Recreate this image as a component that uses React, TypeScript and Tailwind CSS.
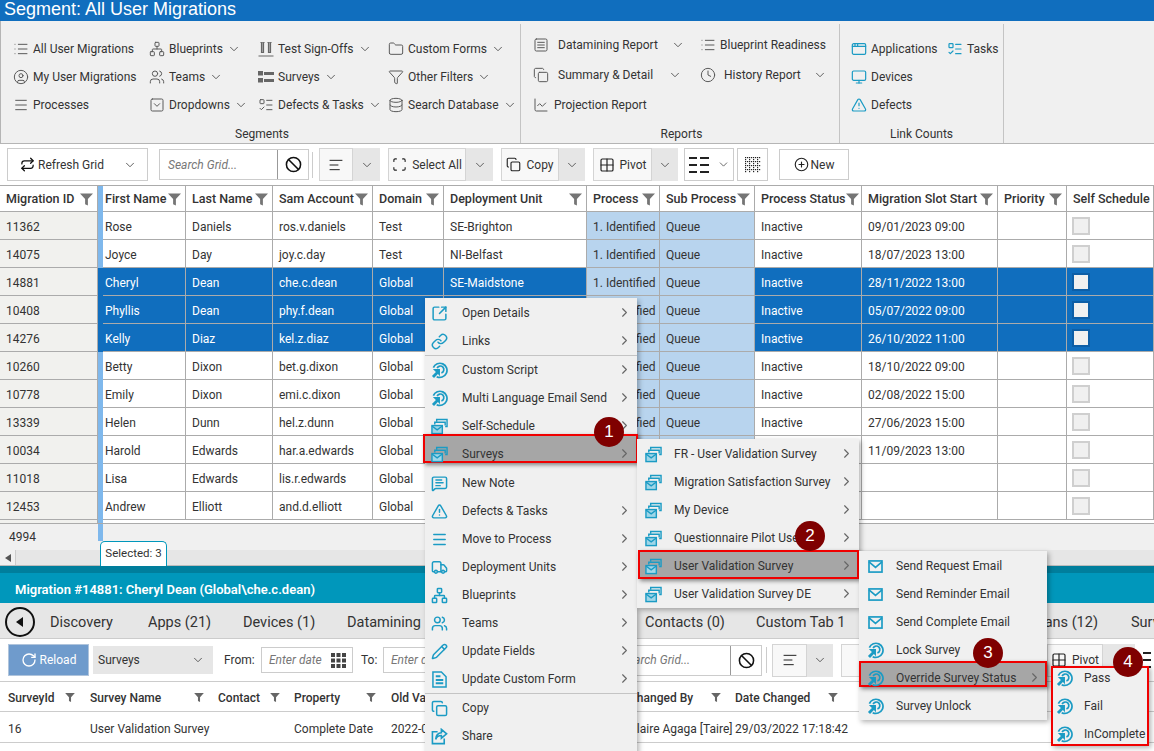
import type { ReactNode } from "react";
import {
  AlignLeft,
  AppWindow,
  Ban,
  ChartLine,
  ChevronDown,
  ChevronRight,
  CircleUser,
  CirclePlus,
  Clock,
  Copy,
  Database,
  Folder,
  Funnel,
  Grid2x2,
  Link,
  List,
  ListTodo,
  Menu,
  MessageSquareText,
  Monitor,
  Network,
  Pencil,
  Repeat,
  RotateCw,
  Scan,
  SquareArrowOutUpRight,
  SquareChevronDown,
  SquareMenu,
  TriangleAlert,
  Truck,
  Users,
} from "lucide-react";

const rowGrid =
  "grid grid-cols-[98px_5px_83px_87px_100px_71px_143px_73px_95px_107px_136px_69px_87px]";
const gridBorder = "border-r border-b border-[#ababab]";

const migrations = [
  ["11362", "Rose", "Daniels", "ros.v.daniels", "Test", "SE-Brighton", "1. Identified", "Queue", "Inactive", "09/01/2023 09:00"],
  ["14075", "Joyce", "Day", "joy.c.day", "Test", "NI-Belfast", "1. Identified", "Queue", "Inactive", "18/07/2023 13:00"],
  ["14881", "Cheryl", "Dean", "che.c.dean", "Global", "SE-Maidstone", "1. Identified", "Queue", "Inactive", "28/11/2022 13:00"],
  ["10408", "Phyllis", "Dean", "phy.f.dean", "Global", "", "1. Identified", "Queue", "Inactive", "05/07/2022 09:00"],
  ["14276", "Kelly", "Diaz", "kel.z.diaz", "Global", "", "1. Identified", "Queue", "Inactive", "26/10/2022 11:00"],
  ["10260", "Betty", "Dixon", "bet.g.dixon", "Global", "", "1. Identified", "Queue", "Inactive", "18/10/2022 09:00"],
  ["10778", "Emily", "Dixon", "emi.c.dixon", "Global", "", "1. Identified", "Queue", "Inactive", "02/08/2022 15:00"],
  ["13339", "Helen", "Dunn", "hel.z.dunn", "Global", "", "1. Identified", "Queue", "Inactive", "27/06/2023 15:00"],
  ["10034", "Harold", "Edwards", "har.a.edwards", "Global", "", "", "", "", "11/09/2023 13:00"],
  ["11018", "Lisa", "Edwards", "lis.r.edwards", "Global", "", "", "", "", ""],
  ["12453", "Andrew", "Elliott", "and.d.elliott", "Global", "", "", "", "", ""],
];

const headers = [
  "Migration ID",
  "",
  "First Name",
  "Last Name",
  "Sam Account",
  "Domain",
  "Deployment Unit",
  "Process",
  "Sub Process",
  "Process Status",
  "Migration Slot Start",
  "Priority",
  "Self Schedule L",
];

function HeadFunnel({ small }: { small?: boolean }) {
  return (
    <svg viewBox="0 0 14 13" className={small ? "w-[10px] h-[9px] shrink-0" : "w-[13px] h-[13px] shrink-0"}>
      <path d="M0 0h14L8.500 6v7l-3-1.500V6z" fill={small ? "#666" : "#757575"} />
    </svg>
  );
}

function TargetIcon() {
  return (
    <svg viewBox="0 0 18 18" className="w-[17px] h-[17px]" fill="none" stroke="#1b9bc4">
      <path d="M6 15.500A7.500 7.500 0 1 0 2.500 6" strokeWidth="1.800" />
      <path d="M6.500 6.500A3.700 3.700 0 1 1 11 11.500" strokeWidth="1.800" />
      <path d="M2 7.500h7.500V15L7.300 12.800 3.200 17 1 14.800l4.200-4.100z" fill="#1b9bc4" stroke="none" />
    </svg>
  );
}

function SurveyIcon() {
  return (
    <svg viewBox="0 0 18 18" className="w-[17px] h-[17px]" fill="none" stroke="#1b9bc4" strokeWidth="1.500">
      <path d="M6 4V1.500h11V9h-2" />
      <path d="M4 7V4.500h11V8" />
      <rect x="1" y="8" width="11" height="8.500" fill="#9fd6e8" />
      <path d="M1 8.500l5.500 4 5.500-4" />
    </svg>
  );
}

function FormIcon() {
  return (
    <svg viewBox="0 0 16 18" className="w-[15px] h-[17px]" fill="none" stroke="#1b9bc4" strokeWidth="1.600">
      <path d="M1 1h9l5 5v11H1z" />
      <path d="M4 5.500h5M4 9.500h8M4 13h8" strokeWidth="2" />
    </svg>
  );
}

function ShareIcon() {
  return (
    <svg viewBox="0 0 18 18" className="w-[17px] h-[17px]" fill="none" stroke="#1b9bc4" strokeWidth="1.700">
      <path d="M7 4H1.500v12.500H14V11" />
      <path d="M11 1.500l5.500 4.700-5.500 4.600V8C8 8 6 9.500 5 12c0-4 2.500-7 6-7z" />
    </svg>
  );
}

function BlueMail() {
  return (
    <svg viewBox="0 0 16 14" className="w-[15px] h-[13px]" fill="none" stroke="#1b9bc4" strokeWidth="1.800">
      <rect x="1" y="1" width="14" height="12" />
      <path d="M1 2l7 6 7-6" />
    </svg>
  );
}

function TubesIcon() {
  return (
    <svg viewBox="0 0 16 16" className="w-[16px] h-[16px]" fill="none" stroke="#666" strokeWidth="1.200">
      <path d="M2.500 1.500h4M9.500 1.500h4M0.500 15h15" />
      <path d="M3.500 1.500v10h2v-10M10.500 1.500v10h2v-10" fill="#aaa" />
    </svg>
  );
}

function SurveyBarsIcon() {
  return (
    <svg viewBox="0 0 16 16" className="w-[16px] h-[16px]" fill="#666">
      <path d="M0 2h5v4.500H0zM6 3h10v3H6zM0 9h5v4.500H0zM6 10h10v3H6z" />
    </svg>
  );
}

const blue = { size: 17, color: "#1b9bc4", strokeWidth: 2.1 };

type menuItem = {
  icon: ReactNode;
  label: string;
  more?: boolean;
  hot?: string;
  extra?: string;
};

function ContextMenu({
  items,
  className,
  iconBox,
  chevron,
}: {
  items: menuItem[];
  className: string;
  iconBox: string;
  chevron: string;
}) {
  return (
    <div className={"absolute bg-[#f0f0f0] shadow-[2px_2px_5px_rgba(0,0,0,0.3)] " + className}>
      {items.map((it) => (
        <div key={it.label} className={"relative h-[28px] flex items-center text-[#333] " + (it.extra ?? "")}>
          {it.hot && (
            <div
              className={
                "absolute bg-[#a6a6a6] border-2 border-[#f00000] shadow-[2px_2px_4px_rgba(0,0,0,0.45)] " + it.hot
              }
            />
          )}
          <div className={"relative flex justify-center items-center shrink-0 " + iconBox}>{it.icon}</div>
          <span className="relative whitespace-nowrap">{it.label}</span>
          {it.more && (
            <ChevronRight size={15} color="#666" strokeWidth={1.8} className={"absolute top-[6px] " + chevron} />
          )}
        </div>
      ))}
    </div>
  );
}

function Badge({ n, className }: { n: number; className: string }) {
  return (
    <div
      className={
        "absolute w-[30px] h-[30px] rounded-full bg-[#7f0000] text-white text-[17px] flex items-center justify-center font-[Liberation_Sans,sans-serif] " +
        className
      }
    >
      {n}
    </div>
  );
}

function Rb({ icon, label, more }: { icon: ReactNode; label: string; more?: boolean }) {
  return (
    <div className="h-[28px] flex items-center gap-[4px] whitespace-nowrap text-[#333]">
      {icon}
      <span>{label}</span>
      {more && <ChevronDown size={14} color="#555" strokeWidth={1.6} />}
    </div>
  );
}

const gi = { size: 16, color: "#5a5a5a", strokeWidth: 1.5 };
const ti = { size: 16, color: "#1b9bc4", strokeWidth: 1.8 };

function Split({ children, w, cw }: { children: ReactNode; w: string; cw: string }) {
  return (
    <div className="flex h-[33px]">
      <div className={"flex items-center justify-center gap-[5px] bg-[#f8f8f8] border border-[#d4d4d4] " + w}>
        {children}
      </div>
      <div className={"flex items-center justify-center bg-[#e6e6e6] " + cw}>
        <ChevronDown size={14} color="#555" strokeWidth={1.6} />
      </div>
    </div>
  );
}

function ColumnsGlyph() {
  return (
    <svg viewBox="0 0 20 18" className="w-[20px] h-[18px]" fill="#222">
      <path d="M0 1h8v2H0zM11 1h9v2h-9zM0 8h8v2H0zM11 8h9v2h-9zM0 15h8v2H0zM11 15h9v2h-9z" />
    </svg>
  );
}

function DottedGrid() {
  const dots = [];
  for (let r = 0; r < 8; r++) {
    for (let c = 0; c < 8; c++) {
      if (r % 2 === 0 || c % 2 === 0) dots.push(<rect key={r + "-" + c} x={c * 2} y={r * 2} width="1.200" height="1.200" />);
    }
  }
  return (
    <svg viewBox="0 0 16 16" className="w-[16px] h-[16px]" fill="#222">
      {dots}
    </svg>
  );
}

export default function App() {
  return (
    <div className="relative w-[1154px] h-[751px] overflow-hidden bg-white flex flex-col font-[Roboto,sans-serif] text-[12px] text-[#333]">
      {/* title */}
      <div className="h-[21px] shrink-0 bg-[#106ebe] text-white text-[18px] leading-[18px] pl-[4px] font-[Liberation_Sans,sans-serif]">
        Segment: All User Migrations
      </div>

      {/* ribbon */}
      <div className="h-[123px] shrink-0 bg-[#f0f0f0] border-b border-l border-[#b5b5b5] flex">
        <div className="w-[520px] flex flex-col justify-between border-r border-[#c4c4c4] mt-[3px]">
          <div className="flex pt-[11px] pl-[12px]">
            <div className="w-[136px]">
              <Rb icon={<List {...gi} />} label="All User Migrations" />
              <Rb icon={<CircleUser {...gi} />} label="My User Migrations" />
              <Rb icon={<Menu {...gi} />} label="Processes" />
            </div>
            <div className="w-[109px]">
              <Rb icon={<Network {...gi} />} label="Blueprints" more />
              <Rb icon={<Users {...gi} />} label="Teams" more />
              <Rb icon={<SquareChevronDown {...gi} />} label="Dropdowns" more />
            </div>
            <div className="w-[130px]">
              <Rb icon={<TubesIcon />} label="Test Sign-Offs" more />
              <Rb icon={<SurveyBarsIcon />} label="Surveys" more />
              <Rb icon={<ListTodo {...gi} />} label="Defects & Tasks" more />
            </div>
            <div>
              <Rb icon={<Folder {...gi} />} label="Custom Forms" more />
              <Rb icon={<Funnel {...gi} />} label="Other Filters" more />
              <Rb icon={<Database {...gi} />} label="Search Database" more />
            </div>
          </div>
          <div className="h-[18px] leading-[18px] text-center text-[#333] pl-[3px]">Segments</div>
        </div>

        <div className="w-[319px] flex flex-col justify-between border-r border-[#c4c4c4] mt-[3px]">
          <div className="flex pt-[6px] pl-[12px]">
            <div className="w-[167px]">
              <div className="h-[30px] flex items-center">
                <SquareMenu {...gi} />
                <span className="ml-[9px] w-[113px]">Datamining Report</span>
                <ChevronDown size={14} color="#555" strokeWidth={1.6} />
              </div>
              <div className="h-[30px] flex items-center">
                <Copy {...gi} />
                <span className="ml-[9px] w-[110px]">Summary & Detail</span>
                <ChevronDown size={14} color="#555" strokeWidth={1.6} />
              </div>
              <div className="h-[30px] flex items-center">
                <ChartLine {...gi} />
                <span className="ml-[5px]">Projection Report</span>
              </div>
            </div>
            <div>
              <div className="h-[30px] flex items-center">
                <List {...gi} />
                <span className="ml-[4px]">Blueprint Readiness</span>
              </div>
              <div className="h-[30px] flex items-center">
                <Clock {...gi} />
                <span className="ml-[8px] w-[89px]">History Report</span>
                <ChevronDown size={14} color="#555" strokeWidth={1.6} />
              </div>
            </div>
          </div>
          <div className="h-[18px] leading-[18px] text-center pl-[3px]">Reports</div>
        </div>

        <div className="w-[164px] flex flex-col justify-between border-r border-[#c4c4c4] mt-[3px]">
          <div className="pt-[11px] pl-[11px]">
            <div className="flex">
              <div className="w-[96px]">
                <Rb icon={<AppWindow {...ti} />} label="Applications" />
              </div>
              <Rb icon={<ListTodo {...ti} />} label="Tasks" />
            </div>
            <Rb icon={<Monitor {...ti} />} label="Devices" />
            <Rb icon={<TriangleAlert {...ti} />} label="Defects" />
          </div>
          <div className="h-[18px] leading-[18px] text-center">Link Counts</div>
        </div>
      </div>

      {/* toolbar */}
      <div className="h-[41px] shrink-0 flex items-center pl-[7px]">
        <div className="w-[141px] h-[33px] border border-[#ccc] flex items-center pl-[12px] pr-[10px]">
          <Repeat size={15} color="#111" strokeWidth={2} />
          <span className="ml-[3px]">Refresh Grid</span>
          <ChevronDown size={14} color="#555" strokeWidth={1.6} className="ml-auto" />
        </div>
        <div className="ml-[11px] flex h-[31px] w-[150px] border border-[#ccc]">
          <div className="flex-1 pl-[8px] flex items-center italic text-[#777] border-r border-[#999]">Search Grid...</div>
          <div className="w-[30px] flex items-center justify-center">
            <Ban size={17} color="#111" strokeWidth={2.2} />
          </div>
        </div>
        <div className="ml-[3px] w-px h-[26px] bg-[#ccc]" />
        <div className="ml-[6px]">
          <Split w="w-[34px]" cw="w-[27px]">
            <AlignLeft size={16} color="#222" strokeWidth={1.5} />
          </Split>
        </div>
        <div className="ml-[8px]">
          <Split w="w-[78px]" cw="w-[27px]">
            <Scan size={15} color="#222" strokeWidth={1.8} />
            <span>Select All</span>
          </Split>
        </div>
        <div className="ml-[8px]">
          <Split w="w-[58px]" cw="w-[26px]">
            <Copy size={15} color="#222" strokeWidth={1.8} />
            <span>Copy</span>
          </Split>
        </div>
        <div className="ml-[8px]">
          <Split w="w-[59px]" cw="w-[26px]">
            <Grid2x2 size={16} color="#222" strokeWidth={1.8} />
            <span>Pivot</span>
          </Split>
        </div>
        <div className="ml-[6px] w-[50px] h-[33px] border border-[#ccc] flex items-center justify-center gap-[8px]">
          <ColumnsGlyph />
          <ChevronDown size={13} color="#555" strokeWidth={1.6} />
        </div>
        <div className="ml-[3px] w-[31px] h-[33px] border border-[#ccc] flex items-center justify-center">
          <DottedGrid />
        </div>
        <div className="ml-[11px] w-[70px] h-[31px] border border-[#ccc] flex items-center justify-center gap-[2px]">
          <CirclePlus size={15} color="#222" strokeWidth={1.8} />
          <span>New</span>
        </div>
      </div>

      {/* main grid */}
      <div className="shrink-0 overflow-hidden">
        <div className={rowGrid + " h-[27px] border-t border-[#ababab] font-medium text-[12.500px]"}>
          {headers.map((h, i) =>
            i === 1 ? (
              <div key="strip" className="bg-[#7fb8ec]" />
            ) : (
              <div
                key={h}
                className={
                  gridBorder +
                  " flex items-center justify-between pt-[2px] pr-[4px] whitespace-nowrap overflow-hidden " +
                  (i === 2 ? "pl-[2px]" : "pl-[6px]")
                }
              >
                <span>{h}</span>
                {i < 12 && <HeadFunnel />}
              </div>
            ),
          )}
        </div>
        {migrations.map((r) => {
          const sel = ["14881", "10408", "14276"].includes(r[0]);
          const cell = gridBorder + " h-[28px] flex items-center pt-[3px] whitespace-nowrap overflow-hidden ";
          const tone = sel ? "bg-[#106ebe] text-white " : "";
          return (
            <div key={r[0]} className={rowGrid}>
              <div className={cell + "pl-[6px] bg-[#f1f1ee]"}>{r[0]}</div>
              <div className={sel ? "bg-[#106ebe]" : "bg-[#7fb8ec]"} />
              {r.slice(1, 6).map((v, i) => (
                <div key={i} className={cell + tone + (i === 0 ? "pl-[2px]" : "pl-[6px]")}>
                  {v}
                </div>
              ))}
              <div className={cell + "pl-[6px] bg-[#b8d4ee]"}>{r[6]}</div>
              <div className={cell + "pl-[6px] bg-[#b8d4ee]"}>{r[7]}</div>
              <div className={cell + "pl-[6px] " + tone}>{r[8]}</div>
              <div className={cell + "pl-[6px] " + tone}>{r[9]}</div>
              <div className={cell + tone} />
              <div className={gridBorder + " h-[28px] flex items-center pl-[5px] " + tone}>
                <div
                  className={
                    sel
                      ? "w-[18px] h-[18px] bg-[#f0f0f0] border-2 border-[#0d5ea6]"
                      : "w-[18px] h-[18px] bg-[#f0f0f0] border-2 border-[#cfcfcf]"
                  }
                />
              </div>
            </div>
          );
        })}
        <div className="h-[4px] flex border-b border-[#ababab]">
          <div className="w-[98px] bg-[#f1f1ee] border-r border-[#ababab]" />
          <div className="w-[5px] bg-[#7fb8ec]" />
        </div>
      </div>

      {/* grid footer */}
      <div className="h-[26px] shrink-0 bg-[#f0f0f0] flex">
        <div className="w-[98px] pl-[9px] flex items-center">4994</div>
        <div className="w-[5px] bg-[#7fb8ec] h-[17px]" />
      </div>
      <div className="h-[16px] shrink-0 bg-[#e6e6e6] flex items-center border-b border-[#bbb]">
        <div className="w-[16px] h-full bg-[#f0f0f0] border-r border-[#ccc] flex items-center justify-center">
          <div className="w-0 h-0 border-y-[4px] border-y-transparent border-r-[6px] border-r-[#555]" />
        </div>
      </div>
      <div className="absolute left-[100px] top-[541px] w-[67px] h-[25px] bg-white border border-b-0 border-[#0097bb] rounded-t-[5px] flex items-center justify-center text-[11.500px]">
        Selected: 3
      </div>

      {/* detail panel */}
      <div className="h-[7px] shrink-0 bg-[#007e9c]" />
      <div className="h-[30px] shrink-0 bg-[#0097bb] text-white font-semibold text-[13px] flex items-center pl-[15px] pt-[3px]">
        Migration #14881: Cheryl Dean (Global\che.c.dean)
      </div>
      <div className="h-[36px] shrink-0 bg-[#e6e6e6] border-b border-[#ccc] flex items-center pl-[5px] pt-[2px] text-[14.500px] whitespace-nowrap">
        <div className="w-[30px] h-[30px] rounded-full border-2 border-[#111] flex items-center justify-center mr-[15px] shrink-0">
          <div className="w-0 h-0 border-y-[5px] border-y-transparent border-r-[7px] border-r-[#111] mr-[2px]" />
        </div>
        <span className="w-[98px] shrink-0 pt-[2px]">Discovery</span>
        <span className="w-[95px] shrink-0 pt-[2px]">Apps (21)</span>
        <span className="w-[104px] shrink-0 pt-[2px]">Devices (1)</span>
        <span className="w-[298px] shrink-0 pt-[2px]">Datamining</span>
        <span className="w-[111px] shrink-0 pt-[2px]">Contacts (0)</span>
        <span className="w-[276px] shrink-0 pt-[2px]">Custom Tab 1</span>
        <span className="w-[99px] shrink-0 pt-[2px]">Plans (12)</span>
        <span className="shrink-0 pt-[2px]">Surveys</span>
      </div>

      <div className="h-[43px] shrink-0 flex items-center pl-[8px] border-b border-[#ccc]">
        <div className="w-[81px] h-[32px] shrink-0 bg-[#6f9bcc] border border-[#afc4dc] text-white flex items-center justify-center gap-[3px]">
          <RotateCw size={16} color="#fff" strokeWidth={2} />
          <span>Reload</span>
        </div>
        <div className="ml-[4px] w-[120px] h-[28px] shrink-0 bg-[#e6e6e6] flex items-center justify-between pl-[5px] pr-[8px]">
          <span>Surveys</span>
          <ChevronDown size={14} color="#555" strokeWidth={1.6} />
        </div>
        <span className="ml-[11px] w-[37px] shrink-0">From:</span>
        <div className="w-[92px] h-[26px] shrink-0 border border-[#ccc] flex items-center justify-between pl-[7px] pr-[6px] italic text-[#777]">
          <span>Enter date</span>
          <svg viewBox="0 0 15 15" className="w-[15px] h-[15px]" fill="#444">
            <path d="M0 0h4v4H0zM5.500 0h4v4h-4zM11 0h4v4h-4zM0 5.500h4v4H0zM5.500 5.500h4v4h-4zM11 5.500h4v4h-4zM0 11h4v4H0zM5.500 11h4v4h-4zM11 11h4v4h-4z" />
          </svg>
        </div>
        <span className="ml-[8px] w-[22px] shrink-0">To:</span>
        <div className="w-[92px] h-[26px] shrink-0 border border-[#ccc] flex items-center pl-[7px] italic text-[#777]">Enter date</div>
        <div className="ml-[137px] w-[150px] h-[31px] shrink-0 flex border border-[#ccc]">
          <div className="flex-1 pl-[8px] flex items-center italic text-[#777] border-r border-[#999]">Search Grid...</div>
          <div className="w-[30px] flex items-center justify-center">
            <Ban size={17} color="#111" strokeWidth={2.2} />
          </div>
        </div>
        <div className="ml-[4px] w-px h-[26px] shrink-0 bg-[#ccc]" />
        <div className="ml-[5px] shrink-0">
          <Split w="w-[35px]" cw="w-[26px]">
            <AlignLeft size={16} color="#222" strokeWidth={1.5} />
          </Split>
        </div>
        <div className="ml-[8px] shrink-0">
          <Split w="w-[78px]" cw="w-[27px]">
            <Scan size={15} color="#222" strokeWidth={1.8} />
          </Split>
        </div>
        <div className="ml-[101px] shrink-0">
          <Split w="w-[56px]" cw="w-[32px]">
            <Grid2x2 size={16} color="#222" strokeWidth={1.8} />
            <span>Pivot</span>
          </Split>
        </div>
        <div className="ml-[8px] shrink-0">
          <ColumnsGlyph />
        </div>
      </div>

      <div className="h-[30px] shrink-0 flex items-center border-b border-[#ccc] font-medium whitespace-nowrap pl-[3px] pt-[2px]">
        <div className="w-[82px] pl-[5px] pr-[10px] flex justify-between items-center"><span>SurveyId</span><HeadFunnel small /></div>
        <div className="w-[128px] pl-[5px] pr-[9px] flex justify-between items-center"><span>Survey Name</span><HeadFunnel small /></div>
        <div className="w-[76px] pl-[5px] pr-[9px] flex justify-between items-center"><span>Contact</span><HeadFunnel small /></div>
        <div className="w-[97px] pl-[5px] pr-[10px] flex justify-between items-center"><span>Property</span><HeadFunnel small /></div>
        <div className="w-[238px] pl-[5px]">Old Value</div>
        <div className="w-[106px] pl-[5px] pr-[9px] flex justify-between items-center"><span>Changed By</span><HeadFunnel small /></div>
        <div className="w-[118px] pl-[5px] pr-[10px] flex justify-between items-center"><span>Date Changed</span><HeadFunnel small /></div>
      </div>
      <div className="h-[31px] shrink-0 flex items-center border-b border-[#ccc] whitespace-nowrap pl-[3px] pt-[3px]">
        <div className="w-[82px] pl-[5px]">16</div>
        <div className="w-[204px] pl-[5px]">User Validation Survey</div>
        <div className="w-[97px] pl-[5px]">Complete Date</div>
        <div className="w-[238px] pl-[5px]">2022-03-29</div>
        <div className="w-[106px] pl-[5px]">Claire Agaga [Taire]</div>
        <div className="pl-[5px]">29/03/2022 17:18:42</div>
      </div>

      {/* context menus */}
      <ContextMenu
        className="left-[425px] top-[298px] w-[212px] pt-px pb-[8px]"
        iconBox="w-[37px] pr-[9px]"
        chevron="left-[192px]"
        items={[
          { icon: <SquareArrowOutUpRight {...blue} />, label: "Open Details", more: true },
          { icon: <Link {...blue} />, label: "Links", more: true, extra: "mb-px after:absolute after:left-0 after:right-0 after:-bottom-px after:h-px after:bg-[#c4c4c4]" },
          { icon: <TargetIcon />, label: "Custom Script", more: true },
          { icon: <TargetIcon />, label: "Multi Language Email Send", more: true },
          { icon: <SurveyIcon />, label: "Self-Schedule", more: true },
          { icon: <SurveyIcon />, label: "Surveys", more: true, hot: "-left-[2px] -right-px -top-[6px] bottom-[5px]", extra: "mb-px" },
          { icon: <MessageSquareText {...blue} />, label: "New Note" },
          { icon: <TriangleAlert {...blue} />, label: "Defects & Tasks", more: true },
          { icon: <Menu {...blue} />, label: "Move to Process", more: true },
          { icon: <Truck {...blue} />, label: "Deployment Units", more: true },
          { icon: <Network {...blue} />, label: "Blueprints", more: true },
          { icon: <Users {...blue} />, label: "Teams", more: true },
          { icon: <Pencil {...blue} />, label: "Update Fields", more: true },
          { icon: <FormIcon />, label: "Update Custom Form", more: true, extra: "mb-px after:absolute after:left-0 after:right-0 after:-bottom-px after:h-px after:bg-[#c4c4c4]" },
          { icon: <Copy {...blue} />, label: "Copy" },
          { icon: <ShareIcon />, label: "Share" },
        ]}
      />
      <ContextMenu
        className="left-[637px] top-[439px] w-[222px] pt-px"
        iconBox="w-[37px] pr-[5px]"
        chevron="left-[202px]"
        items={[
          { icon: <SurveyIcon />, label: "FR - User Validation Survey", more: true },
          { icon: <SurveyIcon />, label: "Migration Satisfaction Survey", more: true },
          { icon: <SurveyIcon />, label: "My Device", more: true },
          { icon: <SurveyIcon />, label: "Questionnaire Pilot User", more: true },
          { icon: <SurveyIcon />, label: "User Validation Survey", more: true, hot: "left-[1px] right-0 -top-[2px] bottom-[1px]" },
          { icon: <SurveyIcon />, label: "User Validation Survey DE", more: true },
        ]}
      />
      <ContextMenu
        className="left-[859px] top-[551px] w-[188px] pt-px"
        iconBox="w-[37px] pr-[5px]"
        chevron="left-[168px]"
        items={[
          { icon: <BlueMail />, label: "Send Request Email" },
          { icon: <BlueMail />, label: "Send Reminder Email" },
          { icon: <BlueMail />, label: "Send Complete Email" },
          { icon: <TargetIcon />, label: "Lock Survey" },
          { icon: <TargetIcon />, label: "Override Survey Status", more: true, hot: "left-0 right-0 -top-[3px] bottom-[5px]" },
          { icon: <TargetIcon />, label: "Survey Unlock" },
        ]}
      />
      <ContextMenu
        className="left-[1051px] top-[666px] w-[98px] h-[80px] border-2 border-[#f00000] [&>div:first-child]:-mt-[4px]"
        iconBox="w-[31px] pr-[9px]"
        chevron="left-0"
        items={[
          { icon: <TargetIcon />, label: "Pass" },
          { icon: <TargetIcon />, label: "Fail" },
          { icon: <TargetIcon />, label: "InComplete" },
        ]}
      />

      <Badge n={1} className="left-[594px] top-[417px]" />
      <Badge n={2} className="left-[795px] top-[521px]" />
      <Badge n={3} className="left-[973px] top-[638px]" />
      <Badge n={4} className="left-[1113px] top-[647px]" />
    </div>
  );
}
